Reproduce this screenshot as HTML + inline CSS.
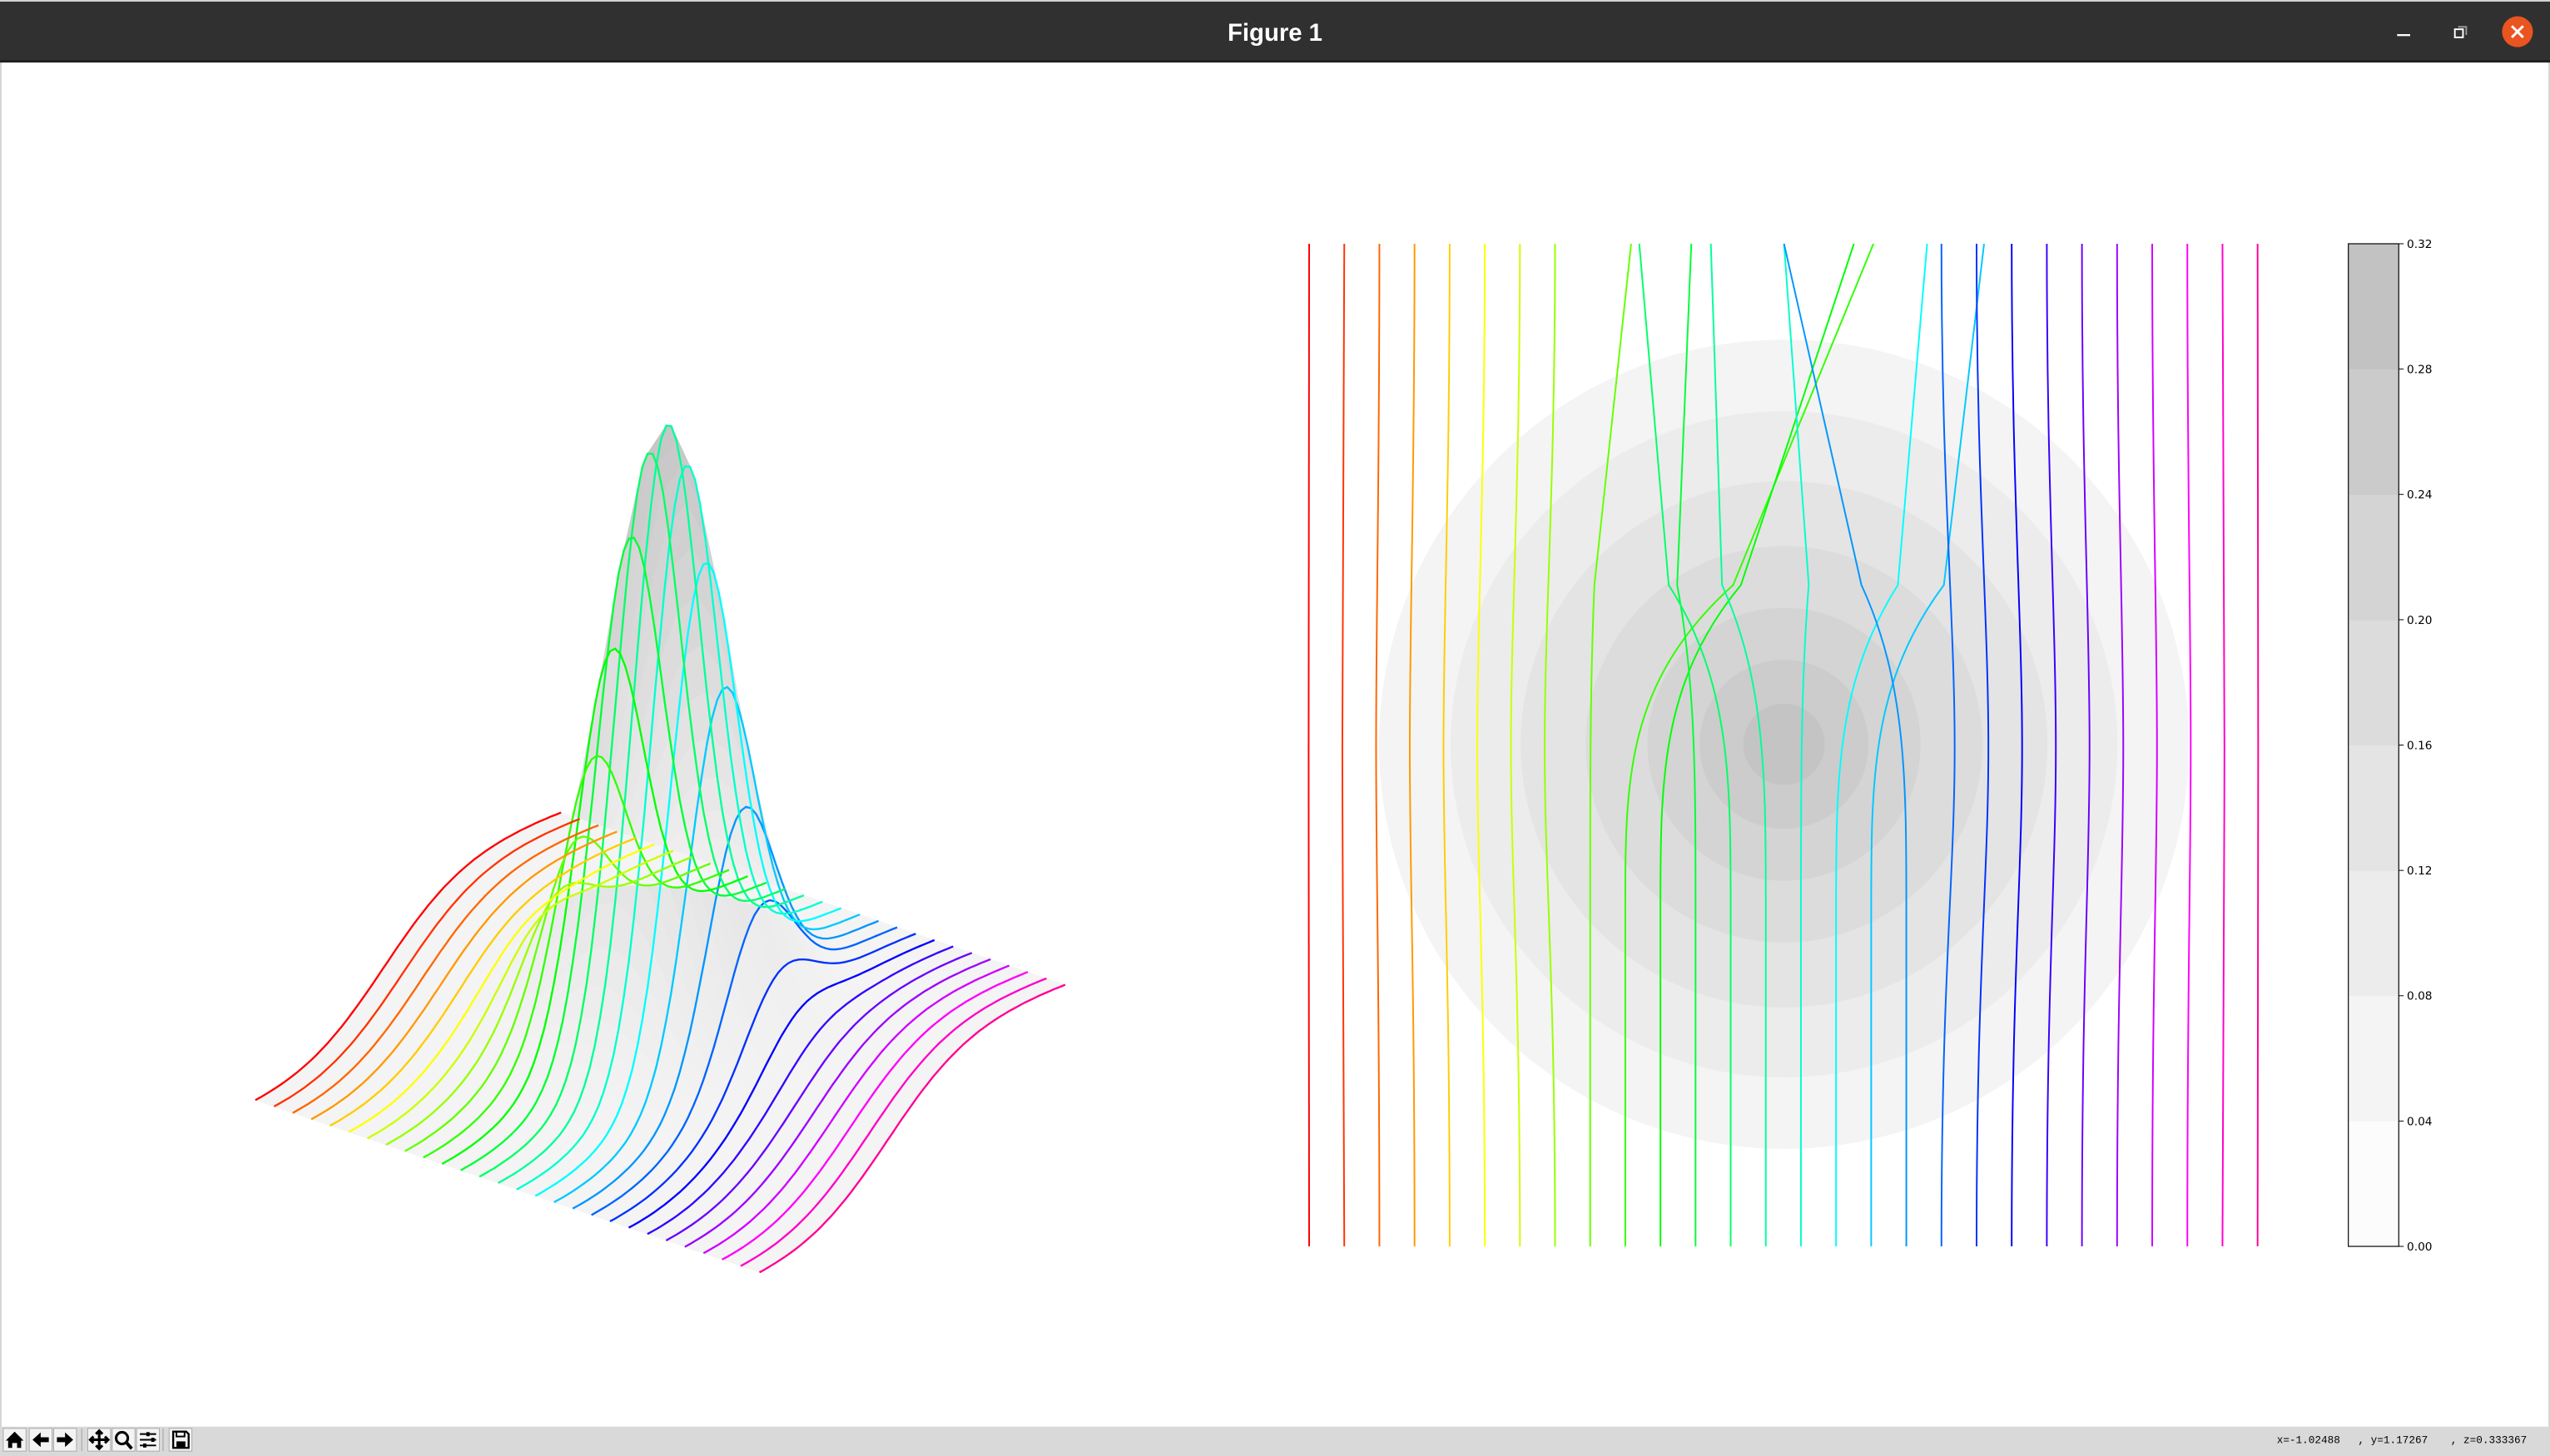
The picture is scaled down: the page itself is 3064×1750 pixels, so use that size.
<!DOCTYPE html>
<html><head><meta charset="utf-8"><style>
html,body{margin:0;padding:0;background:#fff;width:3064px;height:1750px;overflow:hidden}
svg{display:block}
</style></head><body>
<svg id="s" width="3064" height="1750" viewBox="0 0 1568 896" preserveAspectRatio="none" xmlns="http://www.w3.org/2000/svg">
<rect x="0" y="0" width="1568" height="896" fill="#d4d4d4"/>
<rect x="1" y="38" width="1566" height="840" fill="#fff"/>
<rect x="0" y="1" width="1568" height="37" fill="#303030"/>
<rect x="0" y="37" width="1568" height="1.5" fill="#1e1e1e"/>
<text x="784" y="25" text-anchor="middle" fill="#ffffff" font-family="Liberation Sans, sans-serif" font-weight="bold" font-size="15">Figure 1</text>
<rect x="1474" y="21" width="8" height="1.2" fill="#fff"/>
<rect x="1509.5" y="18" width="5" height="5" fill="none" stroke="#fff" stroke-width="1"/>
<path d="M1511.5 16.5 H1516.5 V21.5" fill="none" stroke="#999" stroke-width="1"/>
<circle cx="1548" cy="19.5" r="9.5" fill="#e95420"/>
<path d="M1544.5 16 L1551.5 23 M1551.5 16 L1544.5 23" stroke="#fff" stroke-width="1.5"/>
<g id="contours"></g>
<g id="left"></g>
<g id="right"></g>
<g id="cbar"></g>
<rect x="0" y="878" width="1568" height="18" fill="#d9d9d9"/>
<g font-family="DejaVu Sans, sans-serif" font-size="11" text-anchor="middle" fill="#000">
<rect x="2" y="879" width="14" height="14" fill="#f4f4f4" stroke="#aaa" stroke-width="0.5"/>
<path d="M9 881 L14.5 886.5 H13 V891 H10.5 V888 H7.5 V891 H5 V886.5 H3.5 Z" fill="#000"/>
<rect x="18" y="879" width="14" height="14" fill="#f4f4f4" stroke="#aaa" stroke-width="0.5"/>
<path d="M20 886 L25 881.5 V884.5 H30 V887.5 H25 V890.5 Z" fill="#000"/>
<rect x="33" y="879" width="14" height="14" fill="#f4f4f4" stroke="#aaa" stroke-width="0.5"/>
<path d="M45 886 L40 881.5 V884.5 H35 V887.5 H40 V890.5 Z" fill="#000"/>
<rect x="50" y="879" width="0.6" height="14" fill="#aaa"/>
<rect x="54" y="879" width="14" height="14" fill="#f4f4f4" stroke="#aaa" stroke-width="0.5"/>
<path d="M61 880.5 V891.5 M55.5 886 H66.5 M59 882.5 L61 880.5 L63 882.5 M59 889.5 L61 891.5 L63 889.5 M57.5 884 L55.5 886 L57.5 888 M64.5 884 L66.5 886 L64.5 888" stroke="#000" stroke-width="1.6" fill="none"/>
<rect x="69" y="879" width="14" height="14" fill="#f4f4f4" stroke="#aaa" stroke-width="0.5"/>
<circle cx="75" cy="885" r="3.6" fill="none" stroke="#000" stroke-width="1.6"/>
<path d="M77.5 887.5 L81 891.5" stroke="#000" stroke-width="2"/>
<rect x="84" y="879" width="14" height="14" fill="#f4f4f4" stroke="#aaa" stroke-width="0.5"/>
<path d="M86 882.5 H96 M86 886 H96 M86 889.5 H96" stroke="#000" stroke-width="1"/>
<rect x="90" y="881.3" width="2" height="2.5" fill="#000"/><rect x="93" y="884.8" width="2" height="2.5" fill="#000"/><rect x="88" y="888.3" width="2" height="2.5" fill="#000"/>
<rect x="100" y="879" width="0.6" height="14" fill="#aaa"/>
<rect x="104" y="879" width="14" height="14" fill="#f4f4f4" stroke="#aaa" stroke-width="0.5"/>
<path d="M106.5 881 H114.5 L116 882.5 V891 H106.5 Z" fill="none" stroke="#000" stroke-width="1.2"/>
<rect x="108.5" y="881" width="5" height="3" fill="none" stroke="#000" stroke-width="1"/>
<rect x="108.5" y="887" width="5.5" height="4" fill="#000"/>
</g>
<g font-family="Liberation Mono, monospace" font-size="6.5" fill="#000">
<text x="1400" y="888">x=-1.02488</text>
<text x="1450" y="888">, y=1.17267</text>
<text x="1507" y="888">, z=0.333367</text>
</g>
</svg>
<script>
var NS="http://www.w3.org/2000/svg";
function el(p,t,a){var e=document.createElementNS(NS,t);for(var k in a)e.setAttribute(k,a[k]);p.appendChild(e);return e;}
function col(i,n){var h=i/(n-1)*325;return "hsl("+h+",100%,50%)";}
var cg=document.getElementById("contours");
var radii=[249,205,162,122,84,52,25],grays=["#f4f4f4","#ececec","#e4e4e4","#dcdcdc","#d4d4d4","#cccccc","#c4c4c4"];
for(var k=0;k<radii.length;k++)el(cg,"circle",{cx:1097,cy:458,r:radii[k],fill:grays[k]});
var lg=document.getElementById("left");var N=28,M=60;
function sg(t){return 1/(1+Math.exp(-(t-0.42)*7));}
function P(i,t){
 var fx=157+310*i/27,fy=677+106*i/27;
 var s=(sg(t)-sg(0))/(sg(1)-sg(0));
 var h=350*Math.exp(-Math.pow((i-13)/4,2)-Math.pow((t-0.55)/0.15,2));
 return [fx+188*t,fy-60*t-117*s-h,h];
}
var pts=[];for(var i=0;i<N;i++){pts[i]=[];for(var j=0;j<=M;j++)pts[i][j]=P(i,j/M);}
for(var i=N-2;i>=0;i--)for(var j=0;j<M;j++){
 var a=pts[i][j],b=pts[i][j+1],c=pts[i+1][j+1],d=pts[i+1][j];
 var h=(a[2]+b[2]+c[2]+d[2])/4;var g=Math.round(244-h/350*48);
 el(lg,"polygon",{points:a[0]+","+a[1]+" "+b[0]+","+b[1]+" "+c[0]+","+c[1]+" "+d[0]+","+d[1],fill:"rgb("+g+","+g+","+g+")",stroke:"rgb("+g+","+g+","+g+")","stroke-width":0.4});
}
for(var i=N-1;i>=0;i--){var d="";for(var j=0;j<=M;j++)d+=(j?"L":"M")+pts[i][j][0].toFixed(1)+" "+pts[i][j][1].toFixed(1);
 el(lg,"path",{d:d,fill:"none",stroke:col(i,N),"stroke-width":1.2});}
var rg=document.getElementById("right");
var tops={8:1003,9:1152,10:1140,11:1040,12:1008,13:1052,14:1097,15:1185,16:1220,17:1097};
for(var i=0;i<N;i++){
 var b=805+i*21.6;var t=tops[i];var d;
 if(t===undefined){var bend=(b<1097?-1:1)*Math.max(0,12-Math.abs(b-1097)/25);
  d="M"+b+" 150 C"+b+" 300 "+(b+bend)+" 380 "+(b+bend)+" 460 C"+(b+bend)+" 540 "+b+" 600 "+b+" 767";}
 else{d="M"+t+" 150 L"+((t+b)/2+ (b<1097?-10:10))+" 360 C"+b+" 420 "+b+" 480 "+b+" 560 L"+b+" 767";}
 el(rg,"path",{d:d,fill:"none",stroke:col(i,N),"stroke-width":1});
}
var cb=document.getElementById("cbar");
var cbg=["#fcfcfc","#f4f4f4","#ececec","#e4e4e4","#dcdcdc","#d4d4d4","#cbcbcb","#c2c2c2"];
var h=(767-150)/8;
for(var k=0;k<8;k++)el(cb,"rect",{x:1444,y:767-(k+1)*h,width:31,height:h+0.3,fill:cbg[k]});
el(cb,"rect",{x:1444,y:150,width:31,height:617,fill:"none",stroke:"#000","stroke-width":0.6});
for(var k=0;k<=8;k++){var y=767-k*h;el(cb,"line",{x1:1475,x2:1478,y1:y,y2:y,stroke:"#000","stroke-width":0.5});
 var tx=el(cb,"text",{x:1480,y:y+2.5,"font-family":"DejaVu Sans, sans-serif","font-size":"7",fill:"#000"});tx.textContent=(k*0.04).toFixed(2);}
</script>
</body></html>
